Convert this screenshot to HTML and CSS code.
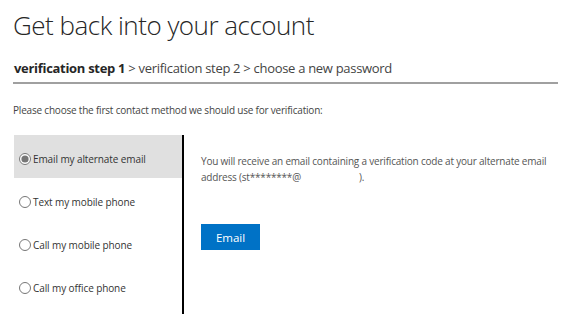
FILE: index.html
```html
<!DOCTYPE html>
<html lang="en">
<head>
    <meta charset="UTF-8">
    <title>Get back into your account</title>
    <link rel="stylesheet" href="styles.css">
</head>
<body>
    <div class="page">
        <h1 class="title">Get back into your account</h1>
        <div class="steps">
            <span class="step-current">verification step 1</span> &gt; verification step 2 &gt; choose a new password
        </div>
        <p class="intro">Please choose the first contact method we should use for verification:</p>

        <div class="methods">
            <div class="options">
                <label class="option selected"><input type="radio" name="method" checked>Email my alternate email</label>
                <label class="option"><input type="radio" name="method">Text my mobile phone</label>
                <label class="option"><input type="radio" name="method">Call my mobile phone</label>
                <label class="option"><input type="radio" name="method">Call my office phone</label>
            </div>
            <div class="detail">
                <p class="detail-text">You will receive an email containing a verification code at your alternate email address (st********@<span class="masked">).</span></p>
                <button class="btn-primary">Email</button>
            </div>
        </div>
    </div>
</body>
</html>
```

FILE: styles.css
```css
body {
    margin: 0;
    padding: 0;
    background: #fff;
    font-family: "Open Sans", "Noto Sans", sans-serif;
    color: #333;
}

.page {
    padding: 0 0 0 13px;
    width: 545px;
}

.title {
    margin: 0;
    padding-top: 7px;
    font-size: 26px;
    font-weight: 300;
    line-height: 36px;
    color: #262626;
    letter-spacing: -0.5px;
}

.steps {
    margin-top: 15px;
    padding: 0 0 4px 1px;
    font-size: 13px;
    line-height: 20px;
    color: #444;
    border-bottom: 2px solid #a0a0a0;
    letter-spacing: -0.3px;
}

.step-current {
    font-weight: 700;
    color: #262626;
}

.intro {
    margin: 19px 0 0 0;
    font-size: 10px;
    line-height: 14px;
    color: #444;
    letter-spacing: -0.2px;
}

.methods {
    display: grid;
    grid-template-columns: 170px 1fr;
    margin-top: 18px;
    padding-left: 1px;
}

.options {
    display: flex;
    flex-direction: column;
    border-right: 2px solid #000;
    height: 180px;
}

.option {
    display: flex;
    align-items: center;
    box-sizing: border-box;
    height: 43px;
    padding: 5px 0 0 5px;
    font-size: 10px;
    letter-spacing: -0.1px;
    color: #333;
}

.option.selected {
    background: #e0e0e0;
}

.option input {
    margin: 0 2px 0 0;
    width: 12px;
    height: 12px;
    accent-color: #777;
}

.detail {
    padding: 18px 0 0 17px;
}

.detail-text {
    margin: 0;
    font-size: 10px;
    line-height: 16px;
    color: #555;
    letter-spacing: -0.2px;
}

.masked {
    margin-left: 58px;
}

.btn-primary {
    margin-top: 39px;
    width: 59px;
    height: 26px;
    border: none;
    background: #0072c6;
    color: #fff;
    font-family: "Open Sans", "Noto Sans", sans-serif;
    font-size: 11.5px;
    cursor: pointer;
}
```
